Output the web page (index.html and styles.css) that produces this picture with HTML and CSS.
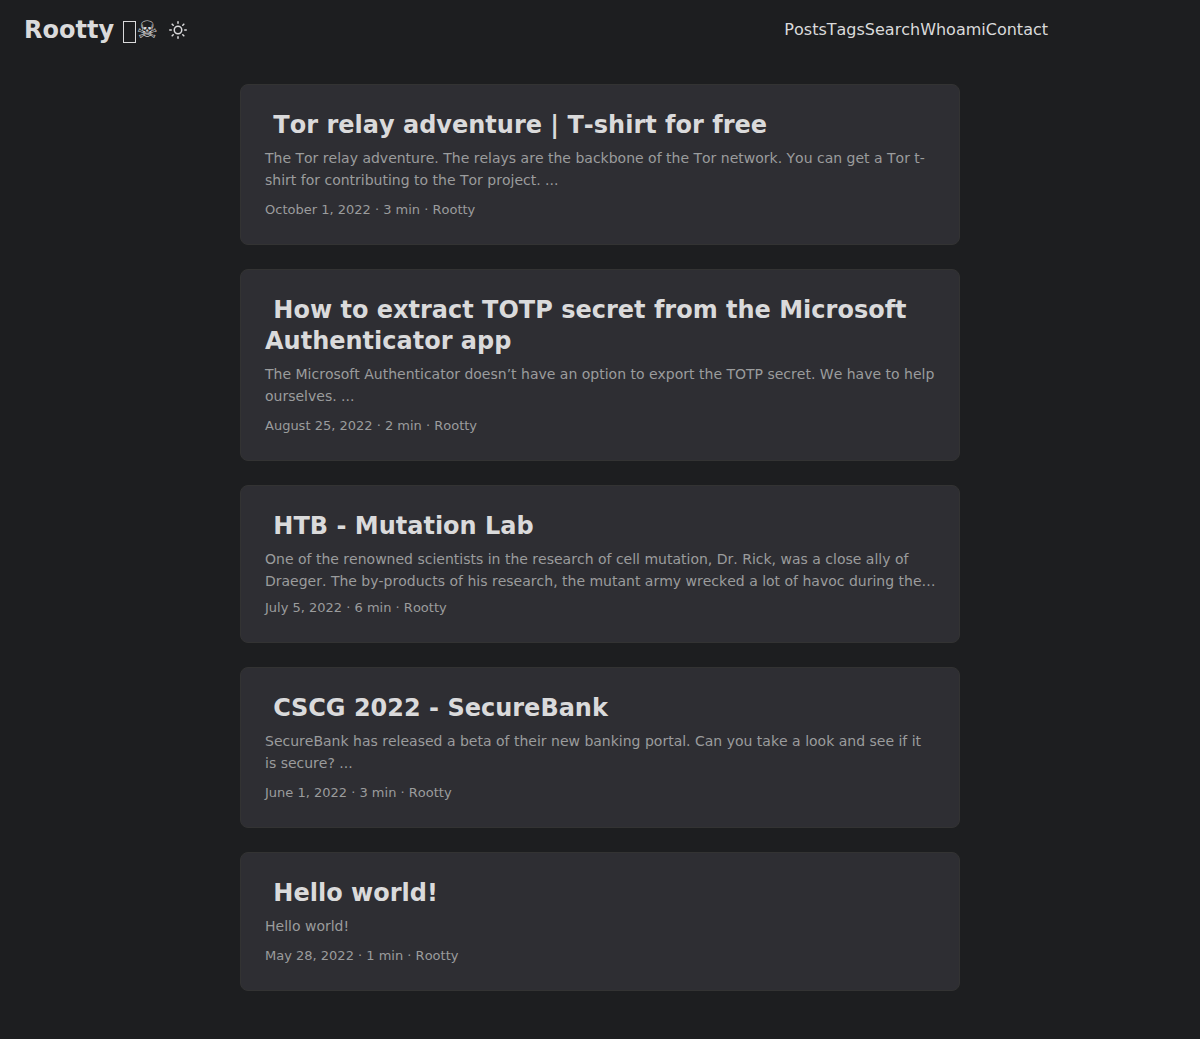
FILE: index.html
```html
<!DOCTYPE html>
<html lang="en">
<head>
<meta charset="utf-8">
<meta name="viewport" content="width=device-width, initial-scale=1">
<title>Rootty</title>
<link rel="stylesheet" href="styles.css">
</head>
<body>
<header class="header">
  <nav class="nav">
    <div class="logo">
      <a class="logo-link" href="#">Rootty <span class="flag"></span>☠</a>
      <button class="theme-toggle" type="button" aria-label="Toggle theme">
        <svg width="18" height="18" viewBox="0 0 24 24" fill="none" stroke="currentColor" stroke-width="2" stroke-linecap="round" stroke-linejoin="round"><circle cx="12" cy="12" r="5"/><path d="M12 1v2M12 21v2M4.22 4.22l1.42 1.42M18.36 18.36l1.42 1.42M1 12h2M21 12h2M4.22 19.78l1.42-1.42M18.36 5.64l1.42-1.42"/></svg>
      </button>
    </div>
    <ul class="menu">
      <li><a href="#">Posts</a></li>
      <li><a href="#">Tags</a></li>
      <li><a href="#">Search</a></li>
      <li><a href="#">Whoami</a></li>
      <li><a href="#">Contact</a></li>
    </ul>
  </nav>
</header>
<main class="main">
  <article class="post">
    <h2 class="post-title">&nbsp;Tor relay adventure | T-shirt for free</h2>
    <p class="post-summary">The Tor relay adventure. The relays are the backbone of the Tor network. You can get a Tor t-shirt for contributing to the Tor project. ...</p>
    <footer class="post-meta">October 1, 2022&nbsp;·&nbsp;3 min&nbsp;·&nbsp;Rootty</footer>
  </article>
  <article class="post">
    <h2 class="post-title">&nbsp;How to extract TOTP secret from the Microsoft Authenticator app</h2>
    <p class="post-summary">The Microsoft Authenticator doesn’t have an option to export the TOTP secret. We have to help ourselves. ...</p>
    <footer class="post-meta">August 25, 2022&nbsp;·&nbsp;2 min&nbsp;·&nbsp;Rootty</footer>
  </article>
  <article class="post">
    <h2 class="post-title">&nbsp;HTB - Mutation Lab</h2>
    <p class="post-summary clamped">One of the renowned scientists in the research of cell mutation, Dr. Rick, was a close ally of Draeger. The by-products of his research, the mutant army wrecked a lot of havoc during the…</p>
    <footer class="post-meta">July 5, 2022&nbsp;·&nbsp;6 min&nbsp;·&nbsp;Rootty</footer>
  </article>
  <article class="post">
    <h2 class="post-title">&nbsp;CSCG 2022 - SecureBank</h2>
    <p class="post-summary">SecureBank has released a beta of their new banking portal. Can you take a look and see if it is secure? ...</p>
    <footer class="post-meta">June 1, 2022&nbsp;·&nbsp;3 min&nbsp;·&nbsp;Rootty</footer>
  </article>
  <article class="post">
    <h2 class="post-title">&nbsp;Hello world!</h2>
    <p class="post-summary">Hello world!</p>
    <footer class="post-meta">May 28, 2022&nbsp;·&nbsp;1 min&nbsp;·&nbsp;Rootty</footer>
  </article>
</main>
</body>
</html>
```

FILE: styles.css
```css
* { box-sizing: border-box; margin: 0; padding: 0; }

body {
  background: #1d1e20;
  color: #dadadb;
  font-family: "DejaVu Sans", sans-serif;
  font-size: 16px;
  font-kerning: none;
  line-height: 26px;
}

a { color: inherit; text-decoration: none; }

.nav {
  display: flex;
  justify-content: space-between;
  padding: 0 24px;
  line-height: 60px;
}

.logo { display: flex; align-items: center; }
.logo-link { font-size: 24px; font-weight: 700; }

.flag {
  display: inline-block;
  width: 13px;
  height: 22px;
  margin-left: 1px;
  border: 1px solid currentColor;
  vertical-align: -5px;
}

.theme-toggle {
  display: flex;
  margin: 0 11px;
  border: 0;
  background: none;
  color: inherit;
  cursor: pointer;
}

.menu {
  display: flex;
  margin-right: 128px;
  list-style: none;
}

.main {
  max-width: 768px;
  margin: 0 auto;
  padding: 24px;
}

.post {
  margin-bottom: 24px;
  padding: 25px 23px 24px 24px;
  border: 1px solid #333333;
  border-radius: 8px;
  background: #2e2e33;
}

.post-title { font-size: 24px; line-height: 31px; }

.post-summary {
  margin: 6px 0 8px;
  color: #9b9c9d;
  font-size: 14px;
  line-height: 22px;
}

.clamped { margin-bottom: 5px; }

.post-meta {
  color: #9b9c9d;
  font-size: 13px;
  line-height: 21px;
}
```
